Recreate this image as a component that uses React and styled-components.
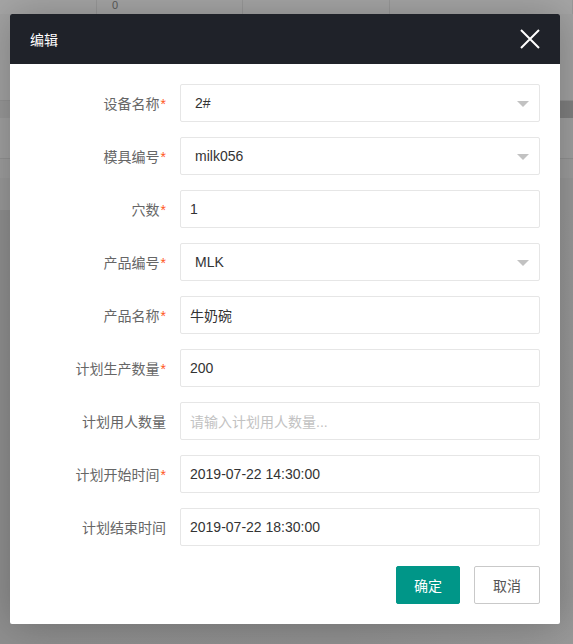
import React from 'react'
import styled, { createGlobalStyle } from 'styled-components'

const GlobalStyle = createGlobalStyle`
  html, body {
    margin: 0;
    padding: 0;
    background: #8f8f8f;
    font-family: "Liberation Sans", "Noto Sans CJK SC", sans-serif;
  }
`

const Page = styled.div`
  position: relative;
  width: 573px;
  height: 644px;
  overflow: hidden;
  background: #8f8f8f;
`

const BackRow = styled.div`
  height: ${p => p.h}px;
  background: ${p => p.bg};
  border-bottom: ${p => (p.line ? '1px solid #929292' : 'none')};
  display: flex;
`

const BackCell = styled.div`
  width: ${p => p.w}px;
  border-right: 1px solid #999;
  box-sizing: border-box;
  font-size: 11px;
  color: #5a5a5a;
  padding-left: 15px;
  line-height: 11px;
`

const Modal = styled.div`
  position: absolute;
  left: 10px;
  top: 14px;
  width: 550px;
  background: #fff;
  box-shadow: 1px 1px 40px rgba(0, 0, 0, 0.25);
  border-radius: 2px;
`

const Header = styled.div`
  height: 50px;
  background: #1f2229;
  display: flex;
  align-items: center;
  justify-content: space-between;
  padding: 0 20px 0 20px;
  color: #fff;
  font-size: 14px;
  border-radius: 2px 2px 0 0;
`

const CloseBtn = styled.div`
  width: 20px;
  height: 20px;
  display: flex;
`

const Body = styled.div`
  padding: 20px 20px 20px 0;
  display: flex;
  flex-direction: column;
  gap: 15px;
`

const Row = styled.div`
  display: flex;
  align-items: center;
  height: 38px;
`

const Label = styled.div`
  width: 170px;
  box-sizing: border-box;
  padding-right: 14px;
  text-align: right;
  font-size: 14px;
  color: #666;
  flex-shrink: 0;
`

const Star = styled.span`
  color: #ff5722;
  margin-left: 1px;
`

const Field = styled.div`
  position: relative;
  flex: 1;
  height: 38px;
  box-sizing: border-box;
  border: 1px solid #e6e6e6;
  border-radius: 2px;
  display: flex;
  align-items: center;
  padding-left: ${p => (p.select ? 14 : 9)}px;
  font-size: 14px;
  color: ${p => (p.placeholder ? '#c2c2c2' : '#333')};
`

const Arrow = styled.span`
  position: absolute;
  right: 10px;
  top: 16px;
  width: 0;
  height: 0;
  border-left: 6px solid transparent;
  border-right: 6px solid transparent;
  border-top: 6px solid #c2c2c2;
`

const Footer = styled.div`
  display: flex;
  justify-content: flex-end;
  gap: 14px;
  margin-top: 5px;
`

const Button = styled.button`
  height: 38px;
  width: ${p => (p.primary ? 64 : 66)}px;
  box-sizing: border-box;
  border-radius: 2px;
  border: 1px solid ${p => (p.primary ? '#009688' : '#c9c9c9')};
  background: ${p => (p.primary ? '#009688' : '#fff')};
  color: ${p => (p.primary ? '#fff' : '#555')};
  font-size: 14px;
  font-family: inherit;
  padding: 0;
  cursor: pointer;
`

const fields = [
  { label: '设备名称', req: true, value: '2#', select: true },
  { label: '模具编号', req: true, value: 'milk056', select: true },
  { label: '穴数', req: true, value: '1' },
  { label: '产品编号', req: true, value: 'MLK', select: true },
  { label: '产品名称', req: true, value: '牛奶碗' },
  { label: '计划生产数量', req: true, value: '200' },
  { label: '计划用人数量', req: false, placeholder: '请输入计划用人数量...' },
  { label: '计划开始时间', req: true, value: '2019-07-22 14:30:00' },
  { label: '计划结束时间', req: false, value: '2019-07-22 18:30:00' },
]

const App = () => {
  return (
    <Page>
      <GlobalStyle />
      <BackRow h={14} bg="#a6a6a6">
        <BackCell w={97}></BackCell>
        <BackCell w={146}>0</BackCell>
        <BackCell w={147}></BackCell>
        <BackCell w={183}></BackCell>
      </BackRow>
      <BackRow h={86} bg="#a2a2a2" line />
      <BackRow h={17} bg="linear-gradient(to right, #989898, #999 90%, #808080 96%)" />
      <BackRow h={40} bg="#a0a0a0" line />
      <BackRow h={19} bg="#9d9d9d" />
      <BackRow h={32} bg="#999" />
      <BackRow h={434} bg="linear-gradient(to right, #8f8f8f, #909090 60%, #999)" />

      <Modal>
        <Header>
          <span>编辑</span>
          <CloseBtn>
            <svg width="20" height="20" viewBox="0 0 20 20">
              <path d="M1 1 L19 19 M19 1 L1 19" stroke="#fff" strokeWidth="2" fill="none" />
            </svg>
          </CloseBtn>
        </Header>
        <Body>
          {fields.map(f => (
            <Row key={f.label}>
              <Label>
                {f.label}
                {f.req && <Star>*</Star>}
              </Label>
              <Field select={f.select} placeholder={f.placeholder}>
                {f.value || f.placeholder}
                {f.select && <Arrow />}
              </Field>
            </Row>
          ))}
          <Footer>
            <Button primary>确定</Button>
            <Button>取消</Button>
          </Footer>
        </Body>
      </Modal>
    </Page>
  )
}

export default App
